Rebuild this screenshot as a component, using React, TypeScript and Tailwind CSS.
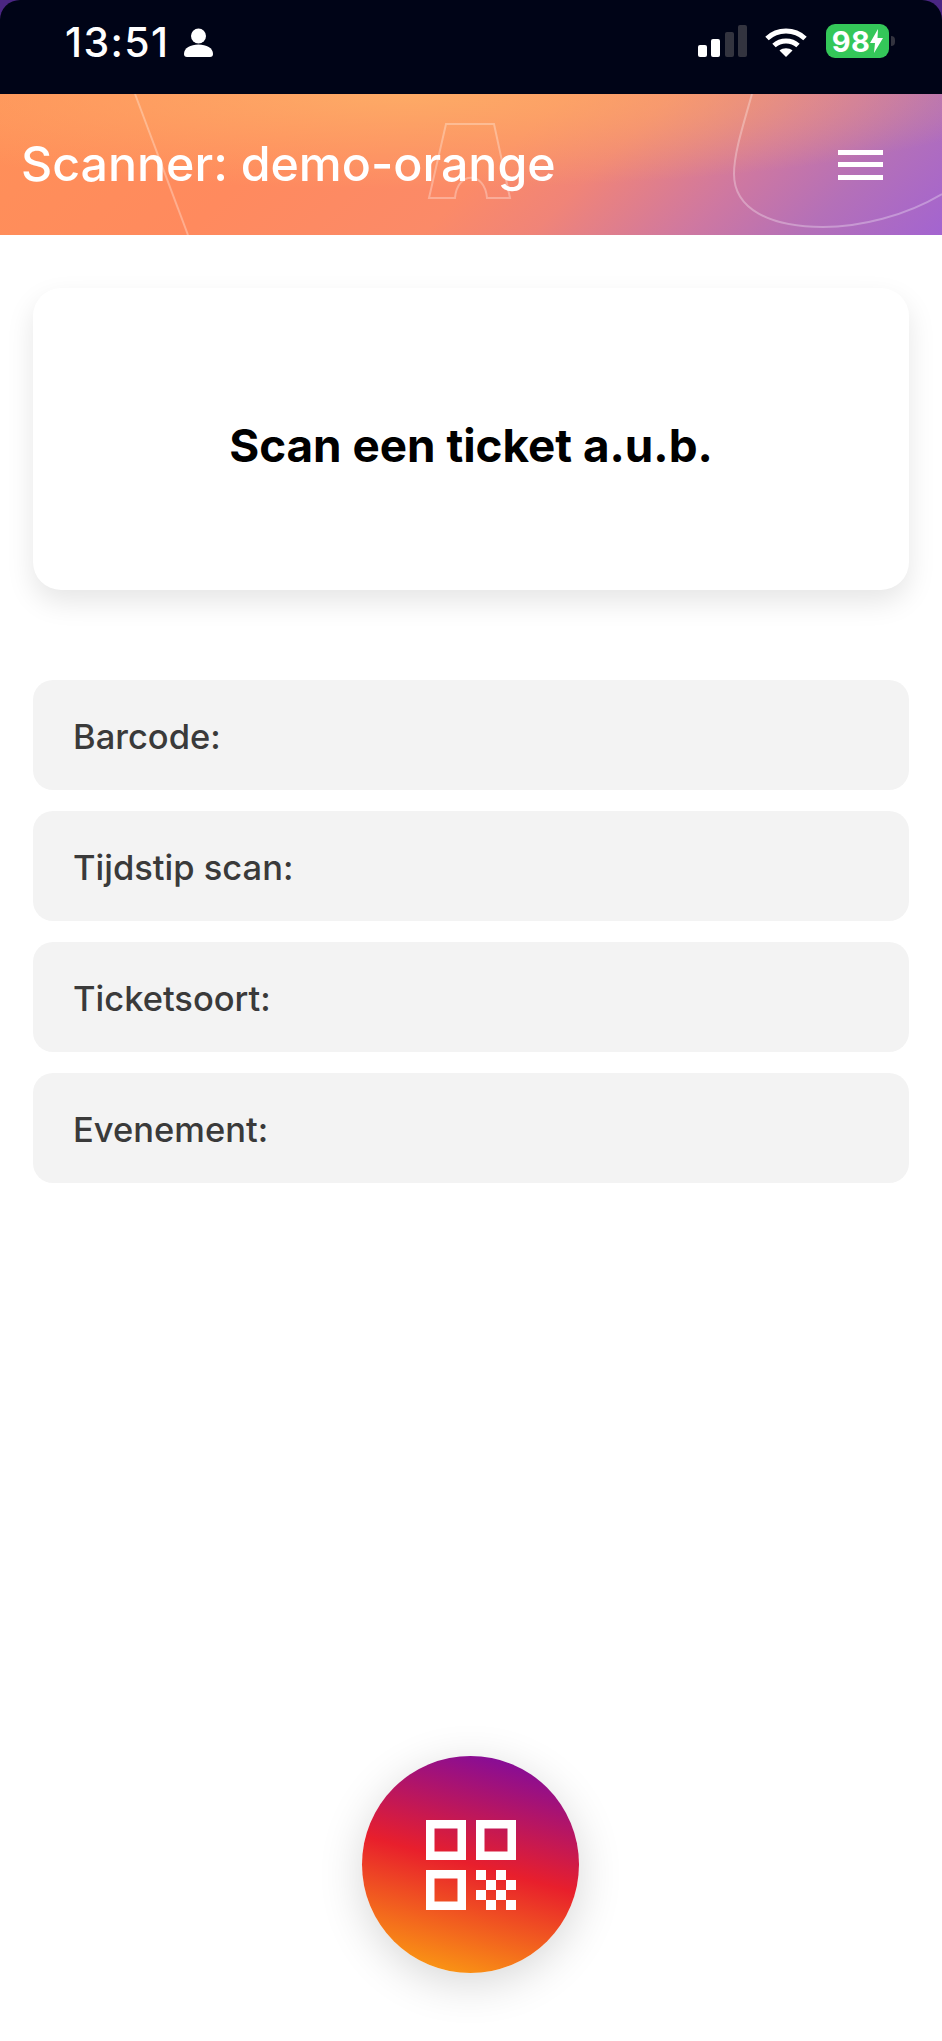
import React from "react";

const font = { fontFamily: '"Inter", "Noto Sans", sans-serif' };

function StatusBar() {
  return (
    <div className="h-[94px] bg-[#4a2683]">
      <div className="relative h-full rounded-t-[20px] bg-[#000417] font-['Inter',sans-serif] text-white">
        <div className="flex h-full items-start justify-between pl-[65px] pr-[47px] pt-[24px]">
          <div className="flex items-center gap-[14px]">
            <span className="text-[41px] font-medium leading-[37px] tracking-[1.4px]">13:51</span>
            <svg width="29" height="30" viewBox="0 0 29 30" fill="#fff">
              <circle cx="14.5" cy="8" r="7.5" />
              <path d="M0 26c0-6 6.500-9.500 14.500-9.500S29 20 29 26c0 2-1 3-3 3H3c-2 0-3-1-3-3z" />
            </svg>
          </div>
          <div className="flex items-start">
            <div className="mr-[18px] mt-[1px] flex h-[32px] items-end gap-[4.500px]">
              <div className="h-[12px] w-[9px] rounded-[2px] bg-white" />
              <div className="h-[18px] w-[9px] rounded-[2px] bg-white" />
              <div className="h-[25px] w-[9px] rounded-[2px] bg-[#33343f]" />
              <div className="h-[32px] w-[9px] rounded-[2px] bg-[#33343f]" />
            </div>
            <svg className="mr-[19px] mt-[4px]" width="42" height="29" viewBox="0 0 42 29" fill="none" stroke="#fff" strokeWidth="5">
              <path d="M2 10.500C12.500 0.500 29.500 0.500 40 10.500" />
              <path d="M9 17.500C15.500 11.500 26.500 11.500 33 17.500" />
              <path d="M21 29l-6.500-6.500c3.500-3 9.500-3 13 0z" fill="#fff" stroke="none" />
            </svg>
            <div className="flex h-[34px] w-[63px] items-center justify-center rounded-[9px] bg-[#34c759] text-[29px] font-bold leading-none tracking-[0.5px]">
              <span>98</span>
              <svg width="13" height="24" viewBox="0 0 13 24" fill="#fff">
                <path d="M8 0L0 14h5l-1 10 9-15H7.500z" />
              </svg>
            </div>
            <div className="ml-[2px] mt-[12px] h-[10px] w-[4px] rounded-r-[4px] bg-[#33343f]" />
          </div>
        </div>
      </div>
    </div>
  );
}

function Header() {
  return (
    <header
      className="relative flex h-[141px] items-center justify-between overflow-hidden bg-[radial-gradient(ellipse_620px_95px_at_43%_0%,rgba(253,172,102,0.95)_0%,rgba(253,170,102,0)_100%),linear-gradient(135deg,#ff9058_0%,#ff8a5e_30%,#fb8a68_52%,#f08478_62%,#cf78a0_76%,#b470b8_87%,#a364d0_100%)] pl-[21px] pr-[59px]"
      style={font}
    >
      <svg className="absolute inset-0" width="942" height="141" viewBox="0 0 942 141" fill="none" stroke="rgba(255,255,255,0.3)" strokeWidth="2">
        <path d="M135 0L188 141" />
        <path d="M446 30h48l16 74h-23c-2-27-30-27-32 0h-26z" />
        <path d="M752 0C742 35 734 60 734 80C734 115 770 133 823 133C860 133 905 122 942 100" />
      </svg>
      <h1 className="relative text-[48.300px] font-medium leading-none text-white">Scanner: demo-orange</h1>
      <div className="relative flex h-[30px] w-[45px] flex-col justify-between">
        <div className="h-[5px] bg-white" />
        <div className="h-[5px] bg-white" />
        <div className="h-[5px] bg-white" />
      </div>
    </header>
  );
}

function Row({ label }: { label: string }) {
  return (
    <div className="flex h-[110px] items-center rounded-[20px] bg-[#f3f3f3] px-[40px] pt-[4px] text-[34.500px] font-medium text-[#3a3a3a]">
      {label}
    </div>
  );
}

function QrIcon() {
  const cells = [
    [0, 0], [2, 0], [1, 1], [3, 1], [0, 2], [2, 2], [1, 3], [3, 3],
  ];
  return (
    <svg width="90" height="90" viewBox="0 0 90 90" fill="#fff">
      <path fillRule="evenodd" d="M0 0h40v40H0zM8.500 8.500v23h23v-23z" />
      <path fillRule="evenodd" d="M50 0h40v40H50zM58.500 8.500v23h23v-23z" />
      <path fillRule="evenodd" d="M0 50h40v40H0zM8.500 58.500v23h23v-23z" />
      {cells.map(([x, y]) => (
        <rect key={`${x}-${y}`} x={50 + x * 10} y={50 + y * 10} width="10" height="10" />
      ))}
    </svg>
  );
}

export default function App() {
  return (
    <div className="relative h-[2041px] overflow-hidden bg-white" style={font}>
      <StatusBar />
      <Header />
      <main className="px-[33px] pt-[53px]">
        <div className="flex h-[302px] items-center justify-center rounded-[28px] bg-white pt-[14px] text-[45.800px] font-bold text-black shadow-[0_12px_28px_rgba(0,0,0,0.1)]">
          Scan een ticket a.u.b.
        </div>
        <div className="mt-[90px] flex flex-col gap-[21px]">
          <Row label="Barcode:" />
          <Row label="Tijdstip scan:" />
          <Row label="Ticketsoort:" />
          <Row label="Evenement:" />
        </div>
      </main>
      <button className="absolute left-[362px] top-[1756px] flex h-[217px] w-[217px] items-center justify-center rounded-full bg-[linear-gradient(195deg,#7a0aa5_3%,#e81f2c_50%,#fca311_97%)] shadow-[0_10px_45px_rgba(0,0,0,0.16)]">
        <QrIcon />
      </button>
    </div>
  );
}
